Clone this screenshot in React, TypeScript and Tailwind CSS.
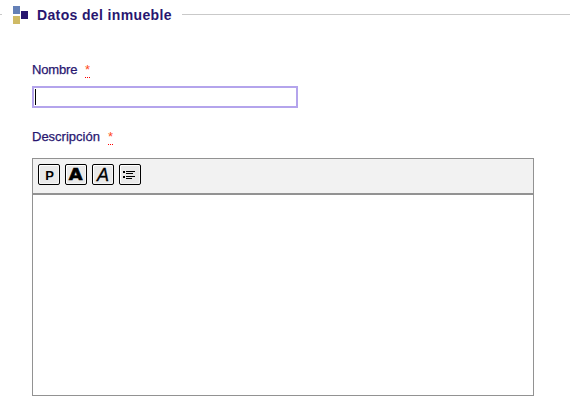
import type { ReactNode } from 'react';

function ToolButton({ label, children }: { label: string; children: ReactNode }) {
  return (
    <button
      aria-label={label}
      className="flex h-[21px] w-[22px] shrink-0 items-center justify-center rounded-[2px] border border-black bg-[#e9e9e9] text-black shadow-[inset_1px_1px_0_#fff,inset_-1px_-1px_0_#f5f5f5]"
    >
      {children}
    </button>
  );
}

function FieldLabel({ text, width }: { text: string; width: string }) {
  return (
    <div className="flex h-5 items-start gap-2 text-[13px] leading-[18px] text-[#28166f]">
      <span className={`${width} whitespace-nowrap [-webkit-text-stroke:0.25px_#28166f]`}>{text}</span>
      <span className="flex h-[17px] w-[5px] justify-center border-b border-dotted border-[#ff0000] text-[#ff4a20]">*</span>
    </div>
  );
}

export default function App() {
  return (
    <main className="h-[405px] w-[570px] overflow-hidden bg-white font-['Liberation_Sans',Arial,sans-serif]">
      <header className="flex h-[30px] items-center">
        <span className="mb-px h-px w-[2px] bg-[#c9c9c9]" />
        <svg className="ml-[11px] h-[18px] w-[15px]" viewBox="0 0 15 18" shapeRendering="crispEdges">
          <rect width="7" height="8" fill="#6480b7" />
          <rect x="8" y="5" width="7" height="8" fill="#28166f" />
          <rect y="10" width="7" height="8" fill="#cfba65" />
        </svg>
        <h1 className="ml-[9px] w-[145px] text-[14px] leading-5 font-bold tracking-[0.36px] whitespace-nowrap text-[#28166f]">
          Datos del inmueble
        </h1>
        <span className="mb-px h-px flex-1 bg-[#c9c9c9]" />
      </header>
      <form className="px-8 pt-[31px]">
        <FieldLabel text="Nombre" width="w-[45px] tracking-[-0.15px]" />
        <div className="mt-[5px] flex h-[22px] w-[266px] border-2 border-[#b4a4ec] pt-px pl-px">
          <span className="h-4 w-px bg-black" />
        </div>
        <div className="mt-5">
          <FieldLabel text="Descripción" width="w-[68px]" />
        </div>
        <section className="mt-[10px] flex h-[238px] w-[502px] flex-col border border-[#929292]">
          <div className="flex h-[36px] gap-[5px] border-b-2 border-[#929292] bg-[#f2f2f2] pt-[5px] pl-[5px]">
            <ToolButton label="Párrafo">
              <span className="mt-[2px] ml-px text-[13px] leading-[13px] font-bold">P</span>
            </ToolButton>
            <ToolButton label="Negrita">
              <span className="font-['DejaVu_Sans',sans-serif] text-[17px] leading-[17px] font-bold [-webkit-text-stroke:0.6px_black]">
                <span className="block scale-x-105 scale-y-95">A</span>
              </span>
            </ToolButton>
            <ToolButton label="Cursiva">
              <span className="text-[18px] leading-[18px] italic [-webkit-text-stroke:0.3px_black]">A</span>
            </ToolButton>
            <ToolButton label="Lista">
              <svg className="h-[19px] w-5" viewBox="0 0 20 19" shapeRendering="crispEdges">
                <path d="M3 6h2v2H3zM3 11h2v2H3zM6 6h9v1H6zM6 8h7v1H6zM6 11h9v1H6zM6 13h6v1H6z" />
              </svg>
            </ToolButton>
          </div>
          <div className="flex-1 bg-white" />
        </section>
      </form>
    </main>
  );
}
